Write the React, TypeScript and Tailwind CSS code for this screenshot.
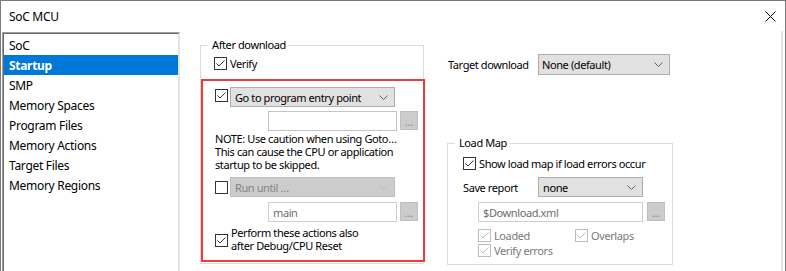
import React from "react";

function Check({ checked = false, disabled = false }: { checked?: boolean; disabled?: boolean }) {
  return (
    <span
      className={
        "relative flex-none w-[13px] h-[13px] bg-white border " +
        (disabled ? "border-[#bcbcbc]" : "border-[#333333]")
      }
    >
      {checked && (
        <svg width="11" height="11" viewBox="0 0 11 11" className="absolute left-0 top-0">
          <path
            d="M1.5 5.5 L4 8 L9.5 2.5"
            fill="none"
            stroke={disabled ? "#bcbcbc" : "#333333"}
            strokeWidth="1"
          />
        </svg>
      )}
    </span>
  );
}

function Chevron({ disabled = false }: { disabled?: boolean }) {
  return (
    <svg width="9" height="5" viewBox="0 0 9 5" className="flex-none">
      <path d="M0.5 0.5 L4.5 4.5 L8.5 0.5" fill="none" stroke={disabled ? "#bdbdbd" : "#606060"} strokeWidth="1" />
    </svg>
  );
}

function Ellipsis() {
  return (
    <div className="flex-none w-[18px] h-[19px] bg-[#cccccc] border border-[#bfbfbf] text-[#8a8a8a] flex items-end justify-center text-[11px] leading-[12px] pb-[1px] tracking-normal">
      …
    </div>
  );
}

export default function App() {
  return (
    <div className="w-[786px] h-[271px] overflow-hidden bg-white border-t border-l border-r border-[#7a7a7a] flex flex-col text-[12px] leading-[15px] tracking-[-0.3px] whitespace-nowrap text-black font-['Noto_Sans',sans-serif]">
      {/* Title bar */}
      <div className="h-[30px] flex-none flex items-center justify-between pl-[8px] pr-[9px]">
        <span>SoC MCU</span>
        <svg width="11" height="11" viewBox="0 0 11 11">
          <path d="M0.5 0.5 L10.5 10.5 M10.5 0.5 L0.5 10.5" stroke="#000" strokeWidth="1" />
        </svg>
      </div>

      {/* Body */}
      <div className="flex-1 flex min-h-0">
        {/* List */}
        <div className="mt-[1px] ml-[1px] w-[178px] h-[260px] flex-none border-t border-l border-r border-[#a0a0a0] border-r-[#e3e3e3]">
          <div className="h-full border-t border-l border-r border-[#696969] border-r-[#e3e3e3] pt-[1px]">
            {[
              "SoC",
              "Startup",
              "SMP",
              "Memory Spaces",
              "Program Files",
              "Memory Actions",
              "Target Files",
              "Memory Regions",
            ].map((t) => (
              <div
                key={t}
                className={
                  "h-[20px] pl-[5px] flex items-center " +
                  (t === "Startup" ? "bg-[#0078d7] text-white font-bold" : "")
                }
              >
                {t}
              </div>
            ))}
          </div>
        </div>

        {/* Content */}
        <div className="flex-1 flex pl-[20px] text-[11px] tracking-[-0.4px]">
          {/* After download group */}
          <fieldset className="mt-[7px] w-[224px] h-[226px] flex-none border border-[#dcdcdc] flex flex-col">
            <legend className="ml-[7px] pl-[4px] pr-[2px] leading-[14px]">After download</legend>
            <div className="mt-[5px] pl-[13px] flex items-center gap-[3px] h-[13px]">
              <Check checked />
              <span>Verify</span>
            </div>

            {/* Red highlight box */}
            <div className="mt-[9px] -mr-[2px] h-[183px] border-2 border-[#ee3a3a] flex flex-col">
              <div className="mt-[6px] pl-[12px] flex items-start gap-[2px]">
                <span className="mt-[2px] flex-none flex">
                  <Check checked />
                </span>
                <div className="flex-none w-[165px] h-[20px] bg-[#e1e1e1] border border-[#adadad] flex items-center justify-between pl-[4px] pr-[6px]">
                  <span>Go to program entry point</span>
                  <Chevron />
                </div>
              </div>
              <div className="mt-[4px] pl-[65px] flex items-start gap-[3px]">
                <div className="flex-none w-[129px] h-[20px] bg-white border border-[#c4c4c4]" />
                <Ellipsis />
              </div>
              <div className="mt-[1px] pl-[12px] leading-[13px]">
                <div>NOTE: Use caution when using Goto…</div>
                <div>This can cause the CPU or application</div>
                <div>startup to be skipped.</div>
              </div>
              <div className="mt-[6px] pl-[12px] flex items-center gap-[2px]">
                <Check />
                <div className="flex-none w-[165px] h-[20px] bg-[#cccccc] border border-[#bfbfbf] text-[#838383] flex items-center justify-between pl-[4px] pr-[6px]">
                  <span>Run until …</span>
                  <Chevron disabled />
                </div>
              </div>
              <div className="mt-[5px] pl-[65px] flex items-start gap-[3px]">
                <div className="flex-none w-[129px] h-[20px] bg-white border border-[#cfcfcf] text-[#6d6d6d] flex items-center pl-[4px]">
                  main
                </div>
                <Ellipsis />
              </div>
              <div className="mt-[4px] pl-[12px] flex items-center gap-[3px]">
                <span className="mt-[3px] flex-none flex">
                  <Check checked />
                </span>
                <div className="leading-[13px]">
                  <div>Perform these actions also</div>
                  <div>after Debug/CPU Reset</div>
                </div>
              </div>
            </div>
          </fieldset>

          {/* Right column */}
          <div className="ml-[23px] w-[226px] flex-none flex flex-col">
            <div className="mt-[23px] flex items-center">
              <span className="pl-[1px] w-[91px] flex-none">Target download</span>
              <div className="flex-none w-[132px] h-[21px] bg-[#e1e1e1] border border-[#adadad] flex items-center justify-between pl-[3px] pr-[6px]">
                <span>None (default)</span>
                <Chevron />
              </div>
            </div>

            <fieldset className="mt-[61px] w-[226px] h-[129px] border border-[#dcdcdc] flex flex-col">
              <legend className="ml-[7px] pl-[4px] pr-[2px] leading-[14px]">Load Map</legend>
              <div className="mt-[7px] pl-[15px] flex items-center gap-[3px] h-[13px]">
                <Check checked />
                <span>Show load map if load errors occur</span>
              </div>
              <div className="mt-[7px] pl-[15px] flex items-center">
                <span className="w-[75px] flex-none">Save report</span>
                <div className="flex-none w-[105px] h-[20px] bg-[#e1e1e1] border border-[#adadad] flex items-center justify-between pl-[4px] pr-[6px]">
                  <span>none</span>
                  <Chevron />
                </div>
              </div>
              <div className="mt-[5px] pl-[30px] flex items-start gap-[4px]">
                <div className="flex-none w-[165px] h-[20px] bg-white border border-[#cfcfcf] text-[#6d6d6d] flex items-center pl-[4px]">
                  $Download.xml
                </div>
                <Ellipsis />
              </div>
              <div className="mt-[7px] pl-[30px] flex items-center h-[13px] text-[#7a7a7a]">
                <div className="w-[97px] flex-none flex items-center gap-[3px]">
                  <Check checked disabled />
                  <span>Loaded</span>
                </div>
                <div className="flex items-center gap-[3px]">
                  <Check checked disabled />
                  <span>Overlaps</span>
                </div>
              </div>
              <div className="mt-[2px] pl-[30px] flex items-center gap-[3px] h-[13px] text-[#7a7a7a]">
                <Check checked disabled />
                <span>Verify errors</span>
              </div>
            </fieldset>
          </div>

          <div className="ml-auto mr-[2px] w-[2px] bg-[#e3e3e3] flex-none" />
        </div>
      </div>
    </div>
  );
}
